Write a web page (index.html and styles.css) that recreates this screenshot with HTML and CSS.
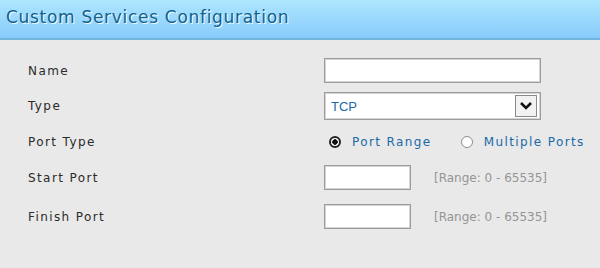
FILE: index.html
```html
<!DOCTYPE html>
<html lang="en">
<head>
  <meta charset="UTF-8">
  <title>Custom Services Configuration</title>
  <link rel="stylesheet" href="styles.css">
</head>
<body>
  <div class="panel">
    <div class="panel-header">Custom Services Configuration</div>
    <form class="form">
      <label class="label row-1">Name</label>
      <div class="control row-1">
        <input type="text" class="text-input wide">
      </div>

      <label class="label row-2">Type</label>
      <div class="control row-2">
        <div class="select">
          <span class="select-value">TCP</span>
          <span class="select-arrow">
            <svg width="14" height="10" viewBox="0 0 14 10">
              <polyline points="2,2 7,7 12,2" fill="none" stroke="#111" stroke-width="2.6"/>
            </svg>
          </span>
        </div>
      </div>

      <label class="label row-3">Port Type</label>
      <div class="control row-3">
        <span class="radio checked"></span>
        <span class="radio-text">Port Range</span>
        <span class="radio second"></span>
        <span class="radio-text">Multiple Ports</span>
      </div>

      <label class="label row-4">Start Port</label>
      <div class="control row-4">
        <input type="text" class="text-input short">
        <span class="hint">[Range: 0 - 65535]</span>
      </div>

      <label class="label row-5">Finish Port</label>
      <div class="control row-5">
        <input type="text" class="text-input short">
        <span class="hint">[Range: 0 - 65535]</span>
      </div>
    </form>
  </div>
</body>
</html>
```

FILE: styles.css
```css
body {
  margin: 0;
  background-color: #e9e9e9;
  font-family: 'DejaVu Sans', sans-serif;
}

.panel-header {
  height: 38px;
  line-height: 34px;
  padding-left: 6px;
  background: linear-gradient(to bottom, #ade6fe, #88cbfb);
  border-bottom: 2px solid #74b5dd;
  color: #11628f;
  font-size: 17px;
  letter-spacing: 0.7px;
  text-shadow: 1px 1px 0 #eefaff;
}

.form {
  display: grid;
  grid-template-columns: 296px 1fr;
  grid-template-rows: 35px 36px 36px 35px 43px;
  padding: 13px 0 0 28px;
  margin: 0;
}

.label {
  display: flex;
  align-items: center;
  color: #2b2b2b;
  font-size: 12px;
  letter-spacing: 1.4px;
}

.control {
  display: flex;
  align-items: center;
}

.text-input {
  box-sizing: border-box;
  height: 25px;
  margin: 0;
  border: 1px solid #9c9c9c;
  box-shadow: inset 0 0 0 1px #d4d4d4;
  background: #fff;
  outline: none;
}

.wide {
  width: 217px;
}

.short {
  width: 87px;
}

.select {
  box-sizing: border-box;
  width: 217px;
  height: 28px;
  display: flex;
  align-items: center;
  justify-content: space-between;
  padding: 0 3px 0 6px;
  border: 1px solid #9c9c9c;
  box-shadow: inset 0 0 0 1px #d4d4d4;
  background: #fff;
}

.select-value {
  font-family: 'Liberation Sans', sans-serif;
  font-size: 13px;
  color: #1a6aa8;
}

.select-arrow {
  box-sizing: border-box;
  width: 22px;
  height: 22px;
  display: flex;
  align-items: center;
  justify-content: center;
  border: 1px solid #8a8a8a;
  background: #f2f2f2;
}

.radio {
  box-sizing: border-box;
  width: 12px;
  height: 12px;
  margin-left: 5px;
  border: 1px solid #8c8c8c;
  border-radius: 50%;
  background: #fff;
}

.radio.checked {
  border: 2px solid #222;
  background: radial-gradient(circle, #111 0 2.5px, #fff 3px);
}

.radio.second {
  margin-left: 29px;
}

.radio-text {
  margin-left: 11px;
  color: #1a6aa8;
  font-size: 12px;
  letter-spacing: 1.4px;
}

.hint {
  margin-left: 23px;
  color: #959595;
  font-size: 12px;
}
```
